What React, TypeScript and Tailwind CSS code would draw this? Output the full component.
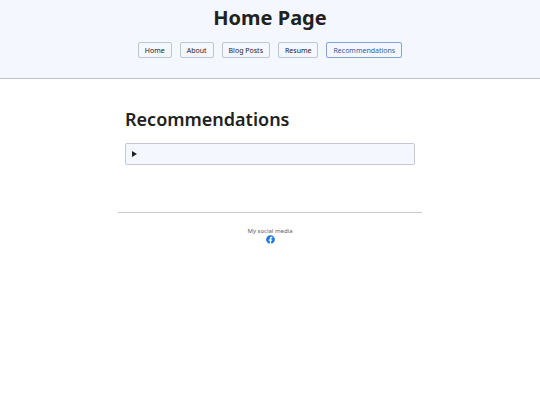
import { FaFacebook } from "react-icons/fa";

const links = ["Home", "About", "Blog Posts", "Resume", "Recommendations"];
const current = "Recommendations";

const App = () => {
  return (
    <div className="min-h-screen bg-white text-[#212121] font-['Noto_Sans',sans-serif]">
      {/* Header */}
      <header className="bg-[#f5f7ff] border-b border-[#bcc4d4] text-center pt-1 pb-5">
        <h1 className="text-xl leading-7 font-bold">Home Page</h1>
        <nav className="flex justify-center gap-2 mt-[10px]">
          {links.map((link) => (
            <a
              key={link}
              href="#"
              aria-current={link === current ? "page" : undefined}
              className={
                link === current
                  ? "border border-[#86a3d0] rounded-xs px-[6px] pt-px text-[7px] leading-[13px] text-[#2f5ba5]"
                  : "border border-[#c0c5d3] rounded-xs px-[6px] pt-px text-[7px] leading-[13px]"
              }
            >
              {link}
            </a>
          ))}
        </nav>
      </header>

      {/* Main Content */}
      <main className="max-w-[290px] mx-auto pt-7 pb-[47px]">
        <h2 className="text-lg leading-6 font-semibold">Recommendations</h2>
        <details className="mt-3 bg-[#f5f7ff] border border-[#c4c7d0] rounded-xs">
          <summary
            aria-label="Recommendations"
            className="flex items-center h-5 px-[6px] cursor-pointer"
          >
            <svg viewBox="0 0 5 6" className="w-[5px] h-[6px]" fill="currentColor">
              <path d="M0 0L5 3L0 6Z" />
            </svg>
          </summary>
        </details>
      </main>

      {/* Footer */}
      <footer className="max-w-[304px] mx-auto border-t border-[#c8c8cc] pt-[14px] flex flex-col items-center text-[6px] leading-[8px] text-[#606060]">
        <p>My social media</p>
        <a href="#" aria-label="Facebook" className="text-[#1976e0]">
          <FaFacebook className="w-[9px] h-[9px]" />
        </a>
      </footer>
    </div>
  );
};

export default App;
